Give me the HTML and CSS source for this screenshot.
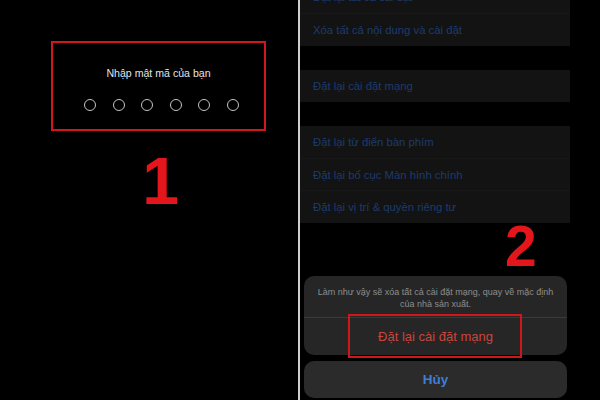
FILE: index.html
```html
<!DOCTYPE html>
<html lang="vi">
<head>
<meta charset="utf-8">
<title>Đặt lại cài đặt mạng</title>
<link rel="stylesheet" href="styles.css">
</head>
<body>
<div class="page">
  <section class="panel left">
    <div class="passcode-box">
      <div class="passcode-title">Nhập mật mã của bạn</div>
      <div class="dots">
        <span class="dot"></span><span class="dot"></span><span class="dot"></span>
        <span class="dot"></span><span class="dot"></span><span class="dot"></span>
      </div>
    </div>
    <div class="step step-one">1</div>
  </section>
  <div class="divider"></div>
  <section class="panel right">
    <div class="group first">
      <div class="row">Đặt lại tất cả cài đặt</div>
      <div class="row">Xóa tất cả nội dung và cài đặt</div>
    </div>
    <div class="group">
      <div class="row">Đặt lại cài đặt mạng</div>
    </div>
    <div class="group">
      <div class="row">Đặt lại từ điển bàn phím</div>
      <div class="row">Đặt lại bố cục Màn hình chính</div>
      <div class="row">Đặt lại vị trí &amp; quyền riêng tư</div>
    </div>
    <div class="step step-two">2</div>
    <div class="sheet">
      <div class="sheet-main">
        <p class="sheet-msg">Làm như vậy sẽ xóa tất cả cài đặt mạng, quay về mặc định của nhà sản xuất.</p>
        <div class="sheet-action">Đặt lại cài đặt mạng</div>
        <div class="highlight"></div>
      </div>
      <div class="sheet-cancel">Hủy</div>
    </div>
  </section>
</div>
</body>
</html>
```
FILE: styles.css
```css
html, body {
  margin: 0;
  padding: 0;
  background: #000;
}
body {
  font-family: "Liberation Sans", Arial, sans-serif;
  width: 600px;
  height: 400px;
  overflow: hidden;
}
.page {
  display: flex;
  width: 600px;
  height: 400px;
}
.panel {
  background: #000;
  height: 400px;
}
.left {
  width: 297px;
  display: flex;
  flex-direction: column;
  padding-left: 51px;
  padding-top: 41px;
  box-sizing: border-box;
}
.passcode-box {
  width: 215px;
  height: 90px;
  border: 2px solid #d3161b;
  box-sizing: border-box;
  display: flex;
  flex-direction: column;
  align-items: center;
  padding-top: 23px;
}
.passcode-title {
  color: #e4e4e4;
  font-size: 10.6px;
  line-height: 14px;
  height: 14px;
}
.dots {
  display: flex;
  gap: 16.6px;
  margin-top: 19px;
  padding-left: 6px;
}
.dot {
  width: 12px;
  height: 12px;
  border: 1.3px solid #c4c4c4;
  border-radius: 50%;
  box-sizing: border-box;
}
.step {
  color: #e5161b;
  font-weight: bold;
  line-height: 1;
}
.step-one {
  width: 215px;
  text-align: center;
  font-size: 66px;
  margin-top: 17px;
  padding-left: 2px;
}
.divider {
  width: 3px;
  height: 400px;
  background: linear-gradient(to right, #000 0, #000 1px, #cfcfcf 1px, #cfcfcf 3px);
}
.right {
  width: 300px;
  position: relative;
  display: flex;
  flex-direction: column;
}
.group {
  width: 270px;
  background: #131313;
  margin-top: 24px;
}
.group.first {
  margin-top: -19px;
}
.row {
  height: 32.3px;
  display: flex;
  align-items: center;
  padding-left: 13px;
  font-size: 11.3px;
  color: #1d3b6d;
  border-top: 1px solid #181818;
  box-sizing: border-box;
}
.row:first-child {
  border-top: none;
}
.step-two {
  position: absolute;
  left: 205px;
  top: 218px;
  font-size: 57px;
}
.sheet {
  margin-top: 53px;
  margin-left: 4px;
  width: 263px;
  display: flex;
  flex-direction: column;
  gap: 6px;
}
.sheet-main {
  position: relative;
  background: #262626;
  border-radius: 10px;
  height: 79px;
  display: flex;
  flex-direction: column;
}
.sheet-msg {
  margin: 0;
  padding: 10px 8px 0;
  height: 42px;
  box-sizing: border-box;
  text-align: center;
  font-size: 9px;
  line-height: 12px;
  color: #8d8d8d;
  border-bottom: 1px solid #3a3a3a;
}
.sheet-action {
  flex: 1;
  display: flex;
  align-items: center;
  justify-content: center;
  font-size: 13px;
  color: #cc443c;
}
.highlight {
  position: absolute;
  left: 44px;
  top: 38px;
  width: 174px;
  height: 44px;
  border: 2px solid #cf161b;
  box-sizing: border-box;
}
.sheet-cancel {
  background: #2b2b2b;
  border-radius: 10px;
  height: 37px;
  display: flex;
  align-items: center;
  justify-content: center;
  font-size: 13.5px;
  font-weight: bold;
  color: #3c7fd9;
}
```
